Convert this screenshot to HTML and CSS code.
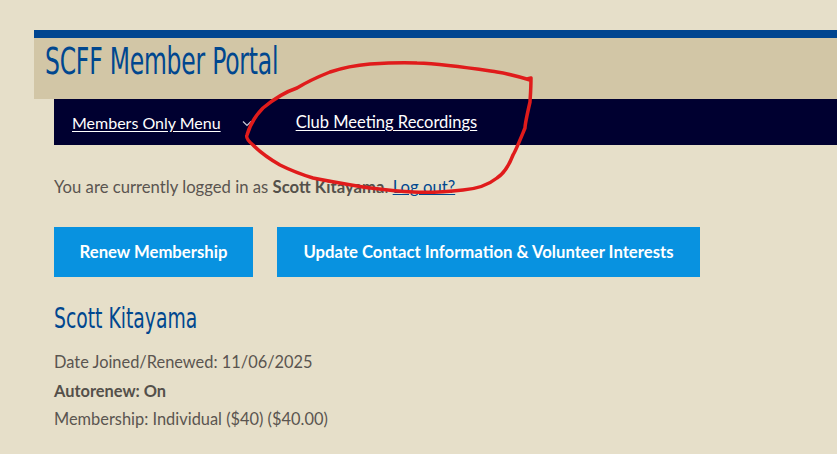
FILE: index.html
```html
<!DOCTYPE html>
<html lang="en">
<head>
<meta charset="utf-8">
<title>SCFF Member Portal</title>
<link rel="stylesheet" href="styles.css">
</head>
<body>
<div class="site">
  <header class="brand">
    <h1 class="brand-title">SCFF Member Portal</h1>
  </header>
  <nav class="nav">
    <a class="nav-link" href="#">Members Only Menu</a>
    <span class="nav-chevron"><svg width="10" height="7" viewBox="0 0 10 7"><path d="M1 1.5 L5 5.5 L9 1.5" fill="none" stroke="#c9c9d6" stroke-width="1.2"/></svg></span>
    <a class="nav-link nav-link-wide" href="#">Club Meeting Recordings</a>
  </nav>
  <main class="content">
    <p class="login">You are currently logged in as <strong>Scott Kitayama</strong>. <a href="#" class="logout">Log out?</a></p>
    <div class="actions">
      <a class="btn btn-renew" href="#">Renew Membership</a>
      <a class="btn btn-update" href="#">Update Contact Information &amp; Volunteer Interests</a>
    </div>
    <h2 class="member-name">Scott Kitayama</h2>
    <p class="detail">Date Joined/Renewed: 11/06/2025</p>
    <p class="detail"><strong>Autorenew: On</strong></p>
    <p class="detail">Membership: Individual ($40) ($40.00)</p>
  </main>
</div>
<svg class="annotation" width="837" height="454" viewBox="0 0 837 454">
  <path d="M527 79 L531 78 C531 90 530 100 530 102 C527 115 525 125 525 128 C520 140 516 150 513 155 C508 168 503 174 497 178 C487 186 475 189 463 190 C445 192 430 193 413 192 C395 191 380 189 363 187 C345 184 328 181 313 178 C300 174 290 170 280 165 C268 158 258 150 253 145 C247 140 246 137 247 135 C250 125 256 115 263 108 C275 98 285 92 297 88 C310 80 320 76 330 72 C345 67 358 65 370 64 C385 63 400 62 417 63 C445 64 470 68 497 72 C510 74 520 77 530 80" fill="none" stroke="#e01b1b" stroke-width="3.5" stroke-linecap="round" stroke-linejoin="round"/>
</svg>
</body>
</html>
```
FILE: styles.css
```css
* { box-sizing: border-box; }
html, body { margin: 0; padding: 0; }
body {
  background: #e6dfc9;
  font-family: "Source Sans Pro", Lato, "Noto Sans", sans-serif;
  font-size: 16.7px;
  color: #5a5550;
  width: 837px;
  height: 454px;
  overflow: hidden;
  position: relative;
}
.site { padding: 30px 0 0 34px; }
.brand {
  border-top: 8px solid #004590;
  background: #d2c6a6;
  height: 69px;
  padding-left: 11px;
}
.brand-title {
  margin: 0;
  font-family: "DejaVu Sans Condensed", "DejaVu Sans", sans-serif;
  font-stretch: condensed;
  font-weight: normal;
  font-size: 37px;
  line-height: 48px;
  color: #00478f;
  display: inline-block;
  transform-origin: left center;
  transform: scaleX(0.705);
  letter-spacing: -0.3px;
}
.nav {
  margin-left: 20px;
  background: #000030;
  height: 46px;
  display: flex;
  align-items: center;
  padding-left: 18px;
}
.nav-link {
  color: #ffffff;
  text-decoration: underline;
  text-underline-offset: 2px;
  font-size: 16px;
}
.nav-link-wide { font-size: 16.5px; }
.nav-chevron {
  display: flex;
  align-items: center;
  margin: 0 44px 0 21px;
  padding-top: 2px;
}
.content { padding-left: 20px; }
.login { margin: 31px 0 0; line-height: 22px; }
.login strong { font-weight: 700; color: #54504a; }
.logout { color: #00478f; text-decoration: underline; }
.actions { display: flex; gap: 24px; margin-top: 29px; }
.btn {
  background: #0892e0;
  color: #ffffff;
  font-weight: 700;
  text-decoration: none;
  height: 50px;
  display: flex;
  align-items: center;
  justify-content: center;
}
.btn-renew { width: 199px; }
.btn-update { width: 423px; }
.member-name {
  margin: 24px 0 0;
  font-family: "DejaVu Sans Condensed", "DejaVu Sans", sans-serif;
  font-stretch: condensed;
  font-weight: normal;
  font-size: 29px;
  line-height: 34px;
  color: #00478f;
  display: inline-block;
  transform-origin: left center;
  transform: scaleX(0.72);
}
.detail { margin: 0; line-height: 28.5px; font-size: 16.4px; }
.member-name + .detail { margin-top: 13px; }
.detail strong { font-weight: 700; color: #54504a; }
.annotation { position: absolute; left: 0; top: 0; pointer-events: none; }
```
